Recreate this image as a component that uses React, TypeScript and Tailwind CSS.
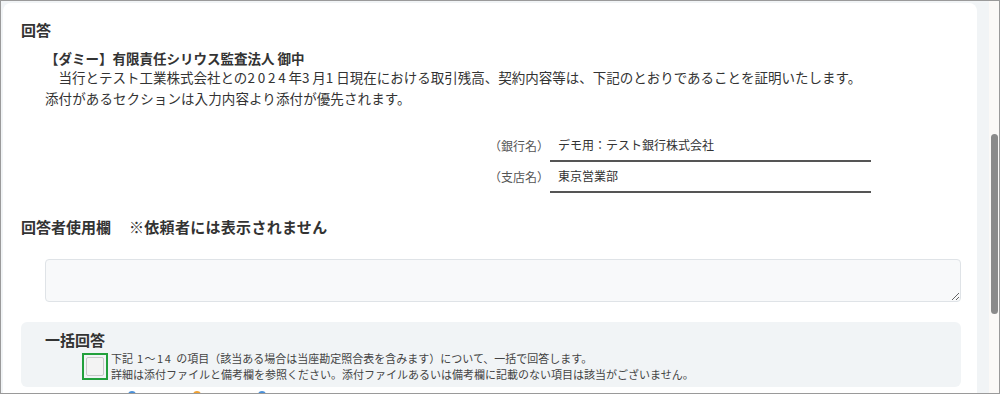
export default function App() {
  return (
    <div className="w-[1000px] h-[394px] border border-[#9a9a9a] bg-[#f1f4f6] flex overflow-hidden font-['Noto_Sans_CJK_JP','Noto_Sans',sans-serif] text-[#333]">
      <div className="flex-1 min-w-0 pl-[2px] pt-[2px] pr-[12px]">
        <div className="bg-white rounded-[8px] h-[520px] pl-[18px] pr-[16px] pt-[17px]">
          <div className="text-[15px] font-bold leading-[20px] h-[20px]">回答</div>

          <div className="mt-[9px] pl-[24px] text-[13.5px] leading-[19px] whitespace-nowrap">
            <div className="font-bold">【ダミー】有限責任シリウス監査法人 御中</div>
            <div>
              {"　当行とテスト工業株式会社との"}<span className="tracking-[2.8px]">2024</span>年<span className="tracking-[2.8px]">3</span>月<span className="tracking-[2.8px]">1</span>日現在における取引残高、契約内容等は、下記のとおりであることを証明いたします。
            </div>
            <div className="mt-[2px] tracking-[0.1px]">添付があるセクションは入力内容より添付が優先されます。</div>
          </div>

          <div className="mt-[23px] pl-[468px] text-[12px]">
            <div className="flex">
              <div className="w-[61px] h-[29px] flex items-center text-[#555] whitespace-nowrap">（銀行名）</div>
              <div className="w-[321px] h-[31px] border-b-2 border-[#555] pl-[8px] flex items-center pb-[1px]">デモ用：テスト銀行株式会社</div>
            </div>
            <div className="flex">
              <div className="w-[61px] h-[29px] flex items-center text-[#555] whitespace-nowrap">（支店名）</div>
              <div className="w-[321px] h-[31px] border-b-2 border-[#555] pl-[8px] flex items-center pb-[1px]">東京営業部</div>
            </div>
          </div>

          <div className="mt-[24px] text-[15px] font-bold leading-[20px] h-[20px] whitespace-nowrap flex">
            <span>回答者使用欄</span>
            <span className="ml-[18px] tracking-[0.3px]">※依頼者には表示されません</span>
          </div>

          <div className="mt-[22px] ml-[24px]">
            <textarea
              readOnly
              className="block w-full h-[43px] bg-[#f8f9fa] border border-[#dfe3e7] rounded-[4px] resize-y outline-none"
            />
          </div>

          <div className="mt-[20px] h-[65px] bg-[#f1f4f6] rounded-[6px] pl-[24px] pt-[8px]">
            <div className="text-[15px] font-bold leading-[20px] h-[20px]">一括回答</div>
            <div className="flex items-start pl-[37px]">
              <div className="mt-[3px] w-[26px] h-[27px] border-2 border-[#22a03c] p-[2px] shrink-0">
                <div className="w-full h-full border border-[#c9c9c9] bg-[#f3f3f3] rounded-[2px]" />
              </div>
              <div className="ml-[3px] text-[11px] leading-[16px] text-[#444] whitespace-nowrap">
                <div>
                  下記<span className="tracking-[1.5px]"> 1～14 </span>の項目（該当ある場合は当座勘定照合表を含みます）について、一括で回答します。
                </div>
                <div>詳細は添付ファイルと備考欄を参照ください。添付ファイルあるいは備考欄に記載のない項目は該当がございません。</div>
              </div>
            </div>
          </div>

          <div className="mt-[4px] flex pl-[107px] gap-[57px]">
            <div className="w-[8px] h-[8px] rounded-full bg-[#4a90d9]" />
            <div className="w-[8px] h-[8px] rounded-full bg-[#f0a030]" />
            <div className="w-[8px] h-[8px] rounded-full bg-[#4a90d9]" />
          </div>
        </div>
      </div>
      <div className="w-[10px] bg-[#fbf9f7] pt-[133px] pl-[2px]">
        <div className="w-[7px] h-[180px] rounded-full bg-[#8a8a8a]" />
      </div>
    </div>
  );
}
